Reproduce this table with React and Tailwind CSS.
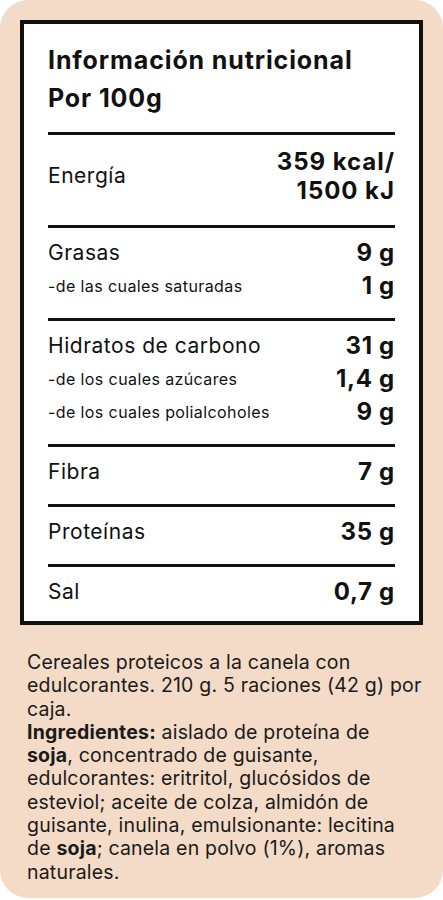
import React from "react";

const font = { fontFamily: "Inter, 'Noto Sans', sans-serif" };

function Divider() {
  return <div className="h-[3px] bg-[#111]" />;
}

function Row({ label, value, sub }) {
  return (
    <div className="flex h-[33px] items-center justify-between">
      <span
        className={
          sub
            ? "text-[16px] tracking-[0.025em] text-[#111]"
            : "text-[21px] tracking-[0.025em] text-[#111]"
        }
      >
        {label}
      </span>
      <span className="text-[24px] font-bold tracking-[0.03em] text-[#111]">{value}</span>
    </div>
  );
}

function Section({ children, last }) {
  return (
    <div>
      <Divider />
      <div className={last ? "pt-2 pb-[13px]" : "pt-2 pb-4"}>{children}</div>
    </div>
  );
}

export default function App() {
  return (
    <div className="min-h-[900px] bg-white" style={font}>
      <div className="rounded-[28px] bg-[#f3dbc7] p-5 pb-[14px]">
        <div className="border-4 border-[#111] bg-white px-6">
          <div className="pt-[17px] pb-[15px] text-[25px] font-bold leading-[38px] tracking-[0.035em] text-[#111]">
            <div>Información nutricional</div>
            <div>Por 100g</div>
          </div>
          <Section>
            <div className="flex h-[66px] items-center justify-between">
              <span className="text-[21px] tracking-[0.025em] text-[#111]">Energía</span>
              <span className="text-right text-[24px] font-bold leading-[29px] tracking-[0.04em] text-[#111]">
                359 kcal/
                <br />
                1500 kJ
              </span>
            </div>
          </Section>
          <Section>
            <Row label="Grasas" value="9 g" />
            <Row label="-de las cuales saturadas" value="1 g" sub />
          </Section>
          <Section>
            <Row label="Hidratos de carbono" value="31 g" />
            <Row label="-de los cuales azúcares" value="1,4 g" sub />
            <Row label="-de los cuales polialcoholes" value="9 g" sub />
          </Section>
          <Section>
            <Row label="Fibra" value="7 g" />
          </Section>
          <Section>
            <Row label="Proteínas" value="35 g" />
          </Section>
          <Section last>
            <Row label="Sal" value="0,7 g" />
          </Section>
        </div>
        <p className="mt-[26px] pl-[7px] text-[19.5px] leading-[23.3px] tracking-[0.01em] text-[#1a1a1a]">
          Cereales proteicos a la canela con
          <br />
          edulcorantes. 210 g. 5 raciones (42 g) por
          <br />
          caja.
          <br />
          <b className="font-bold">Ingredientes:</b> aislado de proteína de
          <br />
          <b className="font-bold">soja</b>, concentrado de guisante,
          <br />
          edulcorantes: eritritol, glucósidos de
          <br />
          esteviol; aceite de colza, almidón de
          <br />
          guisante, inulina, emulsionante: lecitina
          <br />
          de <b className="font-bold">soja</b>; canela en polvo (1%), aromas
          <br />
          naturales.
        </p>
      </div>
    </div>
  );
}
